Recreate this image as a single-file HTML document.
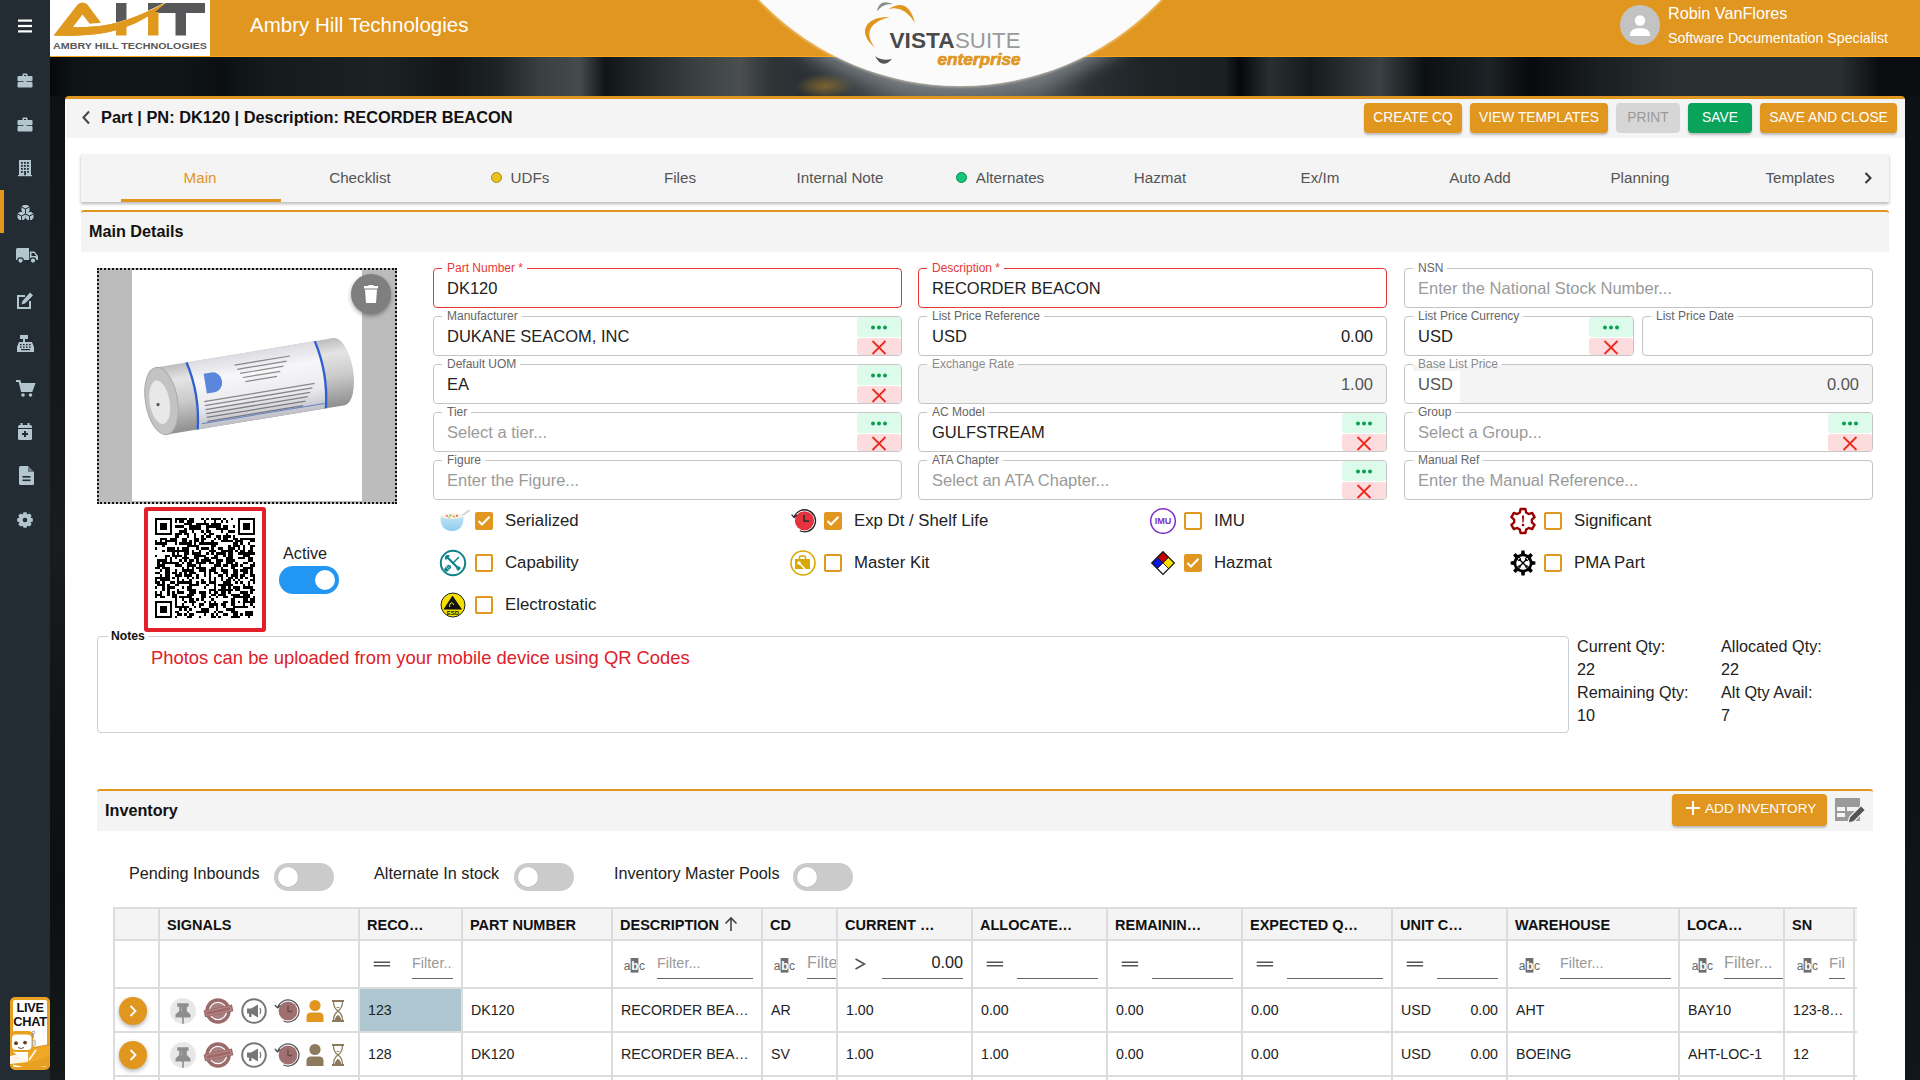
<!DOCTYPE html>
<html><head><meta charset="utf-8"><style>
*{box-sizing:border-box;margin:0;padding:0}
html,body{width:1920px;height:1080px;overflow:hidden}
body{position:relative;background:#0c1216;font-family:"Liberation Sans",sans-serif;color:#222}
.a{position:absolute;overflow:visible}
.t{position:absolute;white-space:nowrap}
.btn{position:absolute;top:103px;height:30px;border-radius:4px;color:#fff;font-size:13.8px;text-align:center;line-height:30px;box-shadow:0 2px 2px rgba(0,0,0,.22)}
.tab{position:absolute;top:154px;width:160px;height:48px;text-align:center;line-height:48px;font-size:15.2px;color:#555}
.fld{position:absolute;height:40px;border:1px solid #c4c4c4;border-radius:4px;background:#fff}
.fld .lb{position:absolute;left:8px;top:-8px;font-size:12px;color:#666;background:#fff;padding:0 4px 0 5px;line-height:14px;white-space:nowrap}
.fld .v{position:absolute;left:13px;top:9.5px;font-size:16.5px;color:#222;line-height:18px;white-space:nowrap}
.fld .ph{color:#9a9a9a}
.fld.req{border-color:#e53a35}
.fld.req .lb{color:#e53a35}
.acts{position:absolute;right:0;top:0;width:44px;height:38px}
.acts .g{position:absolute;left:0;top:0;width:44px;height:20px;background:#dcfbea;border-radius:3px}
.acts .r{position:absolute;left:0;top:21px;width:44px;height:17px;background:#fcdcdc;border-radius:3px}
.cb{position:absolute;width:18px;height:18px;border:2px solid #e0961f;border-radius:2px;background:#fff}
.cb.on{background:#e0961f}
.cbl{position:absolute;font-size:16.8px;color:#222;line-height:18px;white-space:nowrap}
.tg{position:absolute;width:60px;height:28px;border-radius:14px;background:#cbcbcb}
.tg i{position:absolute;left:4px;top:4px;width:20px;height:20px;border-radius:50%;background:#fff;box-shadow:0 0 0 0.5px #bbb}
.th{position:absolute;top:910px;height:30px;font-weight:bold;font-size:14.5px;line-height:30px;padding-left:6px;color:#111;white-space:nowrap;overflow:hidden}
.td{position:absolute;height:44px;font-size:14.2px;line-height:42px;padding-left:7px;color:#222;white-space:nowrap;overflow:hidden}
.fl{position:absolute;top:954px;height:25px;border-bottom:1.3px solid #666;font-size:14.5px;color:#9a9a9a;line-height:18px;white-space:nowrap;overflow:hidden}
</style></head><body>
<div class="a" style="left:0;top:0;width:50px;height:1080px;background:#222c32"></div>
<div class="a" style="left:50px;top:56px;width:1870px;height:40px;background:linear-gradient(90deg,#060809 0px,#0f1416 25px,#101517 130px,#0b0f11 170px,#151b1d 220px,#1c2224 330px,#121618 400px,#1e2527 450px,#3a4042 490px,#454b4d 530px,#101416 555px,#262c2e 600px,#3c4242 650px,#4a4e4e 690px,#303538 720px,#2a3034 750px,#3a4044 810px,#50565a 850px,#50565a 990px,#2a3034 1040px,#1e2326 1100px,#1a1f22 1175px,#05080a 1190px,#2a3032 1220px,#151a1c 1260px,#3a4043 1330px,#0c1012 1375px,#1c2225 1440px,#08090b 1480px,#1a1f22 1550px,#2a2f32 1630px,#2a2f32 1790px,#0a0d10 1830px,#0a0d10 1870px)"></div>
<div class="a" style="left:795px;top:74px;width:60px;height:24px;border-radius:50%;background:radial-gradient(closest-side,rgba(150,115,45,.75),rgba(150,115,45,0))"></div>
<div class="a" style="left:50px;top:96px;width:1870px;height:984px;background:linear-gradient(180deg,#0e1113 0px,#121616 200px,#181c1c 450px,#101314 650px,#0c0f10 800px,#161a1b 1000px)"></div>
<div class="a" style="left:1890px;top:96px;width:30px;height:984px;background:linear-gradient(180deg,#0c1116 0px,#0b1016 500px,#10161b 1000px)"></div>
<div class="a" style="left:683px;top:-468px;width:554px;height:554px;border-radius:50%;background:#8a9094;box-shadow:0 4px 18px 8px rgba(130,136,140,.8)"></div>
<div class="a" style="left:50px;top:0;width:1870px;height:57px;background:#e0961f;border-bottom:1px solid #f5a623"></div>
<svg class="a" style="left:18px;top:19px;" width="14" height="14" viewBox="0 0 14 14"><rect x="0" y="0.5" width="14" height="2.2" fill="#fff"/><rect x="0" y="5.9" width="14" height="2.2" fill="#fff"/><rect x="0" y="11.3" width="14" height="2.2" fill="#fff"/></svg>
<svg class="a" style="left:17px;top:73px;" width="16" height="15" viewBox="0 0 16 15"><path d="M5.5 3 V1.5 Q5.5 0.5 6.5 0.5 H9.5 Q10.5 0.5 10.5 1.5 V3 H9 V2 H7 V3 Z" fill="#b3c6ce"/><rect x="0.5" y="3" width="15" height="5.2" rx="1" fill="#b3c6ce"/><rect x="0.5" y="9" width="15" height="5.5" rx="1" fill="#b3c6ce"/><rect x="6.5" y="7" width="3" height="3" fill="#b3c6ce"/></svg>
<svg class="a" style="left:17px;top:117px;" width="16" height="15" viewBox="0 0 16 15"><path d="M5.5 3 V1.5 Q5.5 0.5 6.5 0.5 H9.5 Q10.5 0.5 10.5 1.5 V3 H9 V2 H7 V3 Z" fill="#b3c6ce"/><rect x="0.5" y="3" width="15" height="5.2" rx="1" fill="#b3c6ce"/><rect x="0.5" y="9" width="15" height="5.5" rx="1" fill="#b3c6ce"/><rect x="6.5" y="7" width="3" height="3" fill="#b3c6ce"/></svg>
<svg class="a" style="left:18px;top:160px;" width="14" height="16" viewBox="0 0 14 16"><rect x="1" y="0" width="12" height="15.5" fill="#b3c6ce"/><rect x="0" y="15" width="14" height="1.2" fill="#b3c6ce"/><rect x="3" y="2" width="1.8" height="1.8" fill="#222c32"/><rect x="3" y="5" width="1.8" height="1.8" fill="#222c32"/><rect x="3" y="8" width="1.8" height="1.8" fill="#222c32"/><rect x="3" y="11" width="1.8" height="1.8" fill="#222c32"/><rect x="6" y="2" width="1.8" height="1.8" fill="#222c32"/><rect x="6" y="5" width="1.8" height="1.8" fill="#222c32"/><rect x="6" y="8" width="1.8" height="1.8" fill="#222c32"/><rect x="9" y="2" width="1.8" height="1.8" fill="#222c32"/><rect x="9" y="5" width="1.8" height="1.8" fill="#222c32"/><rect x="9" y="8" width="1.8" height="1.8" fill="#222c32"/><rect x="9" y="11" width="1.8" height="1.8" fill="#222c32"/><rect x="6.1" y="11" width="1.8" height="4.2" fill="#222c32"/></svg>
<div class="a" style="left:0;top:190px;width:4px;height:43px;background:#e0961f"></div>
<svg class="a" style="left:17px;top:204px;" width="17" height="17" viewBox="-1 0 16 17"><g fill="#b3c6ce"><path d="M5 1 L9 1 L11 3 L11 7 L9 9 L5 9 L3 7 L3 3Z"/><path d="M1 8 L5 8 L7 10 L7 14 L5 16 L1 16 L-1 14 L-1 10Z"/><path d="M9 8 L13 8 L15 10 L15 14 L13 16 L9 16 L7 14 L7 10Z"/></g><g stroke="#222c32" stroke-width="1" fill="none"><path d="M3 3 L7 5 L11 3 M7 5 V9"/><path d="M-1 10 L3 12 L7 10 M3 12 V16"/><path d="M7 10 L11 12 L15 10 M11 12 V16"/></g></svg>
<svg class="a" style="left:16px;top:248px;" width="22" height="16" viewBox="0 0 22 16"><path d="M0 1.5 Q0 0 1.5 0 H13 V12 H0Z" fill="#b3c6ce"/><path d="M13.8 3.5 H18.5 L22 8 V12 H13.8Z" fill="#b3c6ce"/><path d="M15.5 5 H18 L20.2 8 H15.5Z" fill="#222c32"/><circle cx="4.5" cy="12.6" r="2.8" fill="#b3c6ce" stroke="#222c32" stroke-width="1.3"/><circle cx="17" cy="12.6" r="2.8" fill="#b3c6ce" stroke="#222c32" stroke-width="1.3"/></svg>
<svg class="a" style="left:16px;top:292px;" width="18" height="18" viewBox="0 0 18 18"><path d="M1 3 H9 V5 H3 V15 H13 V9 H15 V17 H1Z" fill="#b3c6ce"/><path d="M14 0.5 L17 3.5 L9 11.5 L5.5 12.5 L6.5 9Z" fill="#b3c6ce"/></svg>
<svg class="a" style="left:17px;top:335px;" width="17" height="17" viewBox="0 0 17 17"><rect x="3" y="0" width="8" height="4" fill="#b3c6ce"/><rect x="6" y="4" width="2" height="3" fill="#b3c6ce"/><path d="M2 7 H15 L17 12 V17 H0 V12Z" fill="#b3c6ce"/><rect x="3" y="9.0" width="1.6" height="1.3" fill="#222c32"/><rect x="3" y="11.5" width="1.6" height="1.3" fill="#222c32"/><rect x="6" y="9.0" width="1.6" height="1.3" fill="#222c32"/><rect x="6" y="11.5" width="1.6" height="1.3" fill="#222c32"/><rect x="9" y="9.0" width="1.6" height="1.3" fill="#222c32"/><rect x="9" y="11.5" width="1.6" height="1.3" fill="#222c32"/><rect x="12" y="9.0" width="1.6" height="1.3" fill="#222c32"/><rect x="12" y="11.5" width="1.6" height="1.3" fill="#222c32"/><rect x="4" y="14" width="9" height="1.2" fill="#222c32"/></svg>
<svg class="a" style="left:16px;top:380px;" width="19" height="17" viewBox="0 0 19 17"><path d="M0 1 H3.5 L6 11 H15.5 L18 4 H5" fill="none" stroke="#b3c6ce" stroke-width="2.2"/><path d="M5 4 H18 L15.5 11 H6Z" fill="#b3c6ce"/><circle cx="7" cy="15" r="1.8" fill="#b3c6ce"/><circle cx="14.5" cy="15" r="1.8" fill="#b3c6ce"/></svg>
<svg class="a" style="left:18px;top:423px;" width="14" height="17" viewBox="0 0 14 17"><rect x="0" y="2" width="14" height="15" rx="1.5" fill="#b3c6ce"/><rect x="2.5" y="0" width="2" height="4" fill="#b3c6ce"/><rect x="9.5" y="0" width="2" height="4" fill="#b3c6ce"/><rect x="0" y="5" width="14" height="1" fill="#222c32"/><path d="M6 8 H8 V10 H10 V12 H8 V14 H6 V12 H4 V10 H6Z" fill="#222c32"/></svg>
<svg class="a" style="left:19px;top:466px;" width="15" height="19" viewBox="0 0 15 19"><path d="M0 1.5 Q0 0 1.5 0 H9 L15 6 V17.5 Q15 19 13.5 19 H1.5 Q0 19 0 17.5Z" fill="#b3c6ce"/><path d="M9 0 V6 H15" fill="#222c32" opacity="0.5"/><rect x="3.5" y="10" width="8" height="1.6" fill="#222c32"/><rect x="3.5" y="13.5" width="8" height="1.6" fill="#222c32"/></svg>
<svg class="a" style="left:17px;top:512px;" width="16" height="16" viewBox="0 0 16 16"><g fill="#b3c6ce"><rect x="6.1" y="0.2" width="3.8" height="4" rx="0.8" transform="rotate(0 8 8)"/><rect x="6.1" y="0.2" width="3.8" height="4" rx="0.8" transform="rotate(45 8 8)"/><rect x="6.1" y="0.2" width="3.8" height="4" rx="0.8" transform="rotate(90 8 8)"/><rect x="6.1" y="0.2" width="3.8" height="4" rx="0.8" transform="rotate(135 8 8)"/><rect x="6.1" y="0.2" width="3.8" height="4" rx="0.8" transform="rotate(180 8 8)"/><rect x="6.1" y="0.2" width="3.8" height="4" rx="0.8" transform="rotate(225 8 8)"/><rect x="6.1" y="0.2" width="3.8" height="4" rx="0.8" transform="rotate(270 8 8)"/><rect x="6.1" y="0.2" width="3.8" height="4" rx="0.8" transform="rotate(315 8 8)"/><circle cx="8" cy="8" r="6.3"/></g><circle cx="8" cy="8" r="2.3" fill="#222c32"/></svg>
<div class="a" style="left:10px;top:997px;width:40px;height:73px;border:3px solid #e8a020;border-radius:5px;background:#fff"></div>
<div class="t" style="left:12px;top:1001px;width:36px;text-align:center;font-size:12.8px;font-weight:bold;line-height:14px;color:#111;letter-spacing:-0.3px">LIVE<br>CHAT</div>
<svg class="a" style="left:10px;top:1030px" width="40" height="40" viewBox="10 1030 40 40"><path d="M10 1050 L28 1062 L50 1054 L50 1066 L28 1068 L10 1064Z" fill="#e8a020"/><path d="M28 1048.5 L50 1044.5 L50 1056 L28 1063.5Z" fill="#f0a828"/><path d="M28 1048.5 L50 1044.5" stroke="#c88010" stroke-width="0.8"/><path d="M10 1056 L18 1054 L28 1062 L10 1064Z" fill="#fff" opacity="0.9"/><rect x="10.3" y="1031" width="23" height="21" rx="5" fill="#e8a020"/><rect x="12" y="1034.5" width="19.5" height="15.5" rx="4" fill="#fff"/><circle cx="16" cy="1043.2" r="1.9" fill="#6a3a10"/><circle cx="25" cy="1042.6" r="1.9" fill="#6a3a10"/><path d="M18 1047.5 Q21 1049.5 24 1047.5" stroke="#444" stroke-width="0.9" fill="none"/><path d="M33 1038 V1033" stroke="#777" stroke-width="0.8"/><circle cx="33.5" cy="1032.5" r="1.4" fill="#fff" stroke="#777" stroke-width="0.7"/><rect x="32.5" y="1040" width="3" height="6" rx="1.5" fill="#ddd" stroke="#888" stroke-width="0.5"/><path d="M29 1060 L36 1050" stroke="#fff" stroke-width="1.6"/></svg>
<div class="a" style="left:50px;top:0;width:160px;height:56px;background:#fff"></div>
<svg class="a" style="left:50px;top:0px;" width="160" height="56" viewBox="0 0 160 56"><path d="M66 3 H76.5 V24 H66Z" fill="#58585a"/><path d="M66 24 H76.5 V35.5 H66Z" fill="#e0991f"/><path d="M98 3 H155 V13 H136 V35.5 H125.5 V13 H98Z" fill="#58585a"/><path d="M98 12 H108.5 V35.5 H98Z" fill="#e0991f"/><path d="M3.5 35.5 C22 36.2 44 35.5 62 31.2 C84 26 103 15 116 2.5 C99 11 80 20 60 24.2 C45 27 32 27.5 23 27 L32.5 14.6 L39.6 23.7 L51 22.8 L37 4 Q32.5 0.8 28 4Z" fill="#e0991f"/><path d="M64 23.6 C80 20 99 11 116 2.5" stroke="#fff" stroke-width="1" fill="none"/><path d="M23 27 C32 27.5 45 27 60 24.2 C80 20 99 11 116 2.5 C103 15 84 26 62 31.2 C44 35.5 22 36.2 3.5 35.5Z" fill="#e0991f"/><text x="3" y="48.5" font-family="Liberation Sans" font-weight="bold" font-size="8.8" fill="#58585a" textLength="154" lengthAdjust="spacingAndGlyphs">AMBRY HILL TECHNOLOGIES</text></svg>
<div class="t" style="left:250px;top:13px;font-size:20.5px;color:#fff;line-height:24px">Ambry Hill Technologies</div>
<div class="a" style="left:683px;top:-468px;width:554px;height:554px;border-radius:50%;background:#fbfbfb;box-shadow:0 0 3px 1px rgba(255,240,210,.6)"></div>
<svg class="a" style="left:855px;top:0" width="180" height="75" viewBox="855 0 180 75"><path d="M877 11.5 Q879 -2 893 4 Q882 3.5 877 11.5Z" fill="#8c8c8c"/><path d="M888 9.5 Q908 -4 915 23 Q903 4 888 9.5Z" fill="#e0961f"/><path d="M890 17 C866 16 856 32 875 47.5 C864 34 869 22 890 17Z" fill="#e0961f"/><path d="M875 56 Q882 70 892 59 Q882 61.5 875 56Z" fill="#555"/><text x="889.5" y="47.8" font-family="Liberation Sans" font-weight="bold" font-size="22" fill="#4a4a4a" textLength="65" lengthAdjust="spacingAndGlyphs">VISTA</text><text x="955" y="47.8" font-family="Liberation Sans" font-size="22" fill="#9a9a9a" textLength="65.5" lengthAdjust="spacingAndGlyphs">SUITE</text><text x="937.5" y="64.5" font-family="Liberation Sans" font-weight="bold" font-style="italic" font-size="17" fill="#e0961f" stroke="#e0961f" stroke-width="0.7" textLength="83" lengthAdjust="spacingAndGlyphs">enterprise</text></svg>
<svg class="a" style="left:1620px;top:5px;" width="40" height="40" viewBox="0 0 40 40"><circle cx="20" cy="20" r="20" fill="#c3c3c3"/><circle cx="20" cy="15.5" r="5.2" fill="#fff"/><path d="M10 30 Q10 23 20 23 Q30 23 30 30 V31 H10Z" fill="#fff"/></svg>
<div class="t" style="left:1668px;top:4px;font-size:16.2px;color:#fff;line-height:19px">Robin VanFlores</div>
<div class="t" style="left:1668px;top:30px;font-size:14.2px;color:#fff;line-height:17px">Software Documentation Specialist</div>
<div class="a" style="left:65px;top:96px;width:1840px;height:1000px;background:#fff;border-top:3px solid #e0961f;border-radius:4px 4px 0 0"></div>
<div class="a" style="left:66px;top:99px;width:1839px;height:39px;background:#f4f4f4"></div>
<svg class="a" style="left:81px;top:110px;" width="10" height="15" viewBox="0 0 10 15"><path d="M8 1.5 L2.5 7.5 L8 13.5" stroke="#444" stroke-width="2" fill="none"/></svg>
<div class="t" style="left:101px;top:108px;font-size:16.35px;font-weight:bold;color:#111;line-height:19px">Part | PN: DK120 | Description: RECORDER BEACON</div>
<div class="btn" style="left:1364px;width:98px;background:#e0961f;color:#fff;">CREATE CQ</div>
<div class="btn" style="left:1470px;width:138px;background:#e0961f;color:#fff;">VIEW TEMPLATES</div>
<div class="btn" style="left:1616px;width:64px;background:#d6d6d6;color:#9a9a9a;box-shadow:none;">PRINT</div>
<div class="btn" style="left:1688px;width:64px;background:#0aa35a;color:#fff;">SAVE</div>
<div class="btn" style="left:1760px;width:137px;background:#e0961f;color:#fff;">SAVE AND CLOSE</div>
<div class="a" style="left:81px;top:154px;width:1808px;height:48px;background:#f4f4f4;box-shadow:0 2px 3px rgba(0,0,0,.28)"></div>
<div class="tab" style="left:120px;color:#e0961f">Main</div>
<div class="tab" style="left:280px;color:#555">Checklist</div>
<div class="tab" style="left:440px;color:#555"><span style="display:inline-block;width:11px;height:11px;border-radius:50%;background:#e8c41c;border:1px solid #a88a08;margin-right:9px;vertical-align:0px"></span>UDFs</div>
<div class="tab" style="left:600px;color:#555">Files</div>
<div class="tab" style="left:760px;color:#555">Internal Note</div>
<div class="tab" style="left:920px;color:#555"><span style="display:inline-block;width:11px;height:11px;border-radius:50%;background:#16c47a;border:1px solid #0a8a50;margin-right:9px;vertical-align:0px"></span>Alternates</div>
<div class="tab" style="left:1080px;color:#555">Hazmat</div>
<div class="tab" style="left:1240px;color:#555">Ex/Im</div>
<div class="tab" style="left:1400px;color:#555">Auto Add</div>
<div class="tab" style="left:1560px;color:#555">Planning</div>
<div class="tab" style="left:1720px;color:#555">Templates</div>
<div class="a" style="left:121px;top:199px;width:160px;height:3px;background:#e0961f"></div>
<svg class="a" style="left:1863px;top:171px;" width="10" height="14" viewBox="0 0 10 14"><path d="M2.5 2 L7.5 7 L2.5 12" stroke="#333" stroke-width="2" fill="none"/></svg>
<div class="a" style="left:81px;top:210px;width:1808px;height:42px;background:#f4f4f4;border-top:2px solid #e0961f;border-radius:3px 3px 0 0"></div>
<div class="t" style="left:89px;top:222px;font-size:16.2px;font-weight:bold;color:#111;line-height:19px">Main Details</div>
<div class="a" style="left:97px;top:268px;width:300px;height:236px;border:2px dotted #111;background:#bcbcbc"></div>
<div class="a" style="left:132px;top:270px;width:230px;height:231px;background:#fff"></div>
<svg class="a" style="left:132px;top:270px" width="230" height="231" viewBox="132 270 230 231"><defs><linearGradient id="cyl" x1="0" y1="0" x2="0" y2="1"><stop offset="0" stop-color="#bdbdbd"/><stop offset="0.22" stop-color="#e4e4e4"/><stop offset="0.55" stop-color="#cbcbcb"/><stop offset="1" stop-color="#8f8f8f"/></linearGradient><linearGradient id="lab" x1="0" y1="0" x2="0" y2="1"><stop offset="0" stop-color="#dcdce2"/><stop offset="0.3" stop-color="#f7f7f9"/><stop offset="0.7" stop-color="#eaeaee"/><stop offset="1" stop-color="#bfc0c6"/></linearGradient></defs><g transform="translate(161.5 401) rotate(-9.4)"><rect x="0" y="-34" width="180" height="68" fill="url(#cyl)"/><ellipse cx="180" cy="0" rx="14" ry="34" fill="url(#cyl)"/><path d="M30 -34 H162 Q170 0 162 34 H30 Q38 0 30 -34Z" fill="url(#lab)"/><path d="M31 -34 Q39 0 31 34" stroke="#2f5fd0" stroke-width="2.4" fill="none"/><path d="M161 -34 Q169 0 161 34" stroke="#2f5fd0" stroke-width="2.4" fill="none"/><path d="M46 -20 h8 a9 10 0 0 1 0 20 h-8z" fill="#5a86dc"/><rect x="78" y="-24.0" width="56" height="1.2" fill="#333" opacity="0.55"/><rect x="80" y="-19.5" width="50" height="1.2" fill="#333" opacity="0.55"/><rect x="82" y="-15.0" width="44" height="1.2" fill="#333" opacity="0.55"/><rect x="84" y="-10.5" width="38" height="1.2" fill="#333" opacity="0.55"/><rect x="86" y="-6.0" width="32" height="1.2" fill="#333" opacity="0.55"/><rect x="42" y="7" width="112" height="1.3" fill="#333" opacity="0.55"/><rect x="42" y="11" width="109" height="1.3" fill="#333" opacity="0.55"/><rect x="42" y="15" width="106" height="1.3" fill="#333" opacity="0.55"/><rect x="42" y="19" width="103" height="1.3" fill="#333" opacity="0.55"/><rect x="42" y="23" width="100" height="1.3" fill="#333" opacity="0.55"/><rect x="42" y="27" width="97" height="1.3" fill="#333" opacity="0.55"/><path d="M36 29 H160" stroke="#3a64c8" stroke-width="1" opacity="0.7"/><ellipse cx="0" cy="0" rx="16" ry="34" fill="#c3c3c3" stroke="#a9a9a9" stroke-width="1"/><ellipse cx="-2" cy="1" rx="10" ry="22" fill="#e8e8e8"/><circle cx="-4" cy="3" r="1.6" fill="#555"/></g></svg>
<div class="a" style="left:351px;top:274px;width:40px;height:40px;border-radius:50%;background:#7f7f7f;box-shadow:0 2px 4px rgba(0,0,0,.35)"></div>
<svg class="a" style="left:362px;top:285px;" width="18" height="19" viewBox="0 0 18 19"><rect x="2" y="1" width="14" height="2.5" fill="#fff"/><rect x="6.5" y="0" width="5" height="2" fill="#fff"/><path d="M3 4.5 H15 L14 18 H4Z" fill="#fff"/></svg>
<div class="a" style="left:144px;top:507px;width:122px;height:125px;border:4px solid #e3202a;border-radius:3px;background:#fff;z-index:1"></div>
<svg class="a" style="left:155px;top:518px;shape-rendering:crispEdges;z-index:2" width="100" height="100" viewBox="0 0 41 41"><path d="M0 0h7v1h-7zM8 0h5v1h-5zM14 0h2v1h-2zM19 0h1v1h-1zM21 0h1v1h-1zM23 0h4v1h-4zM28 0h1v1h-1zM31 0h1v1h-1zM34 0h7v1h-7zM0 1h1v1h-1zM6 1h1v1h-1zM8 1h1v1h-1zM10 1h2v1h-2zM13 1h3v1h-3zM20 1h1v1h-1zM24 1h1v1h-1zM27 1h1v1h-1zM29 1h1v1h-1zM34 1h1v1h-1zM40 1h1v1h-1zM0 2h1v1h-1zM2 2h3v1h-3zM6 2h1v1h-1zM12 2h3v1h-3zM17 2h5v1h-5zM23 2h4v1h-4zM34 2h1v1h-1zM36 2h3v1h-3zM40 2h1v1h-1zM0 3h1v1h-1zM2 3h3v1h-3zM6 3h1v1h-1zM8 3h4v1h-4zM14 3h5v1h-5zM21 3h6v1h-6zM28 3h2v1h-2zM32 3h1v1h-1zM34 3h1v1h-1zM36 3h3v1h-3zM40 3h1v1h-1zM0 4h1v1h-1zM2 4h3v1h-3zM6 4h1v1h-1zM12 4h1v1h-1zM14 4h5v1h-5zM21 4h1v1h-1zM25 4h5v1h-5zM34 4h1v1h-1zM36 4h3v1h-3zM40 4h1v1h-1zM0 5h1v1h-1zM6 5h1v1h-1zM10 5h3v1h-3zM15 5h1v1h-1zM19 5h1v1h-1zM21 5h2v1h-2zM27 5h1v1h-1zM30 5h3v1h-3zM34 5h1v1h-1zM40 5h1v1h-1zM0 6h7v1h-7zM8 6h3v1h-3zM12 6h2v1h-2zM16 6h1v1h-1zM20 6h1v1h-1zM22 6h2v1h-2zM29 6h1v1h-1zM34 6h7v1h-7zM8 7h2v1h-2zM13 7h1v1h-1zM16 7h1v1h-1zM19 7h1v1h-1zM21 7h2v1h-2zM25 7h2v1h-2zM28 7h3v1h-3zM32 7h1v1h-1zM2 8h3v1h-3zM6 8h3v1h-3zM11 8h2v1h-2zM16 8h2v1h-2zM19 8h2v1h-2zM24 8h1v1h-1zM26 8h1v1h-1zM28 8h2v1h-2zM32 8h2v1h-2zM35 8h6v1h-6zM0 9h1v1h-1zM2 9h1v1h-1zM4 9h5v1h-5zM11 9h2v1h-2zM14 9h1v1h-1zM16 9h2v1h-2zM19 9h1v1h-1zM23 9h1v1h-1zM27 9h5v1h-5zM33 9h3v1h-3zM39 9h2v1h-2zM0 10h5v1h-5zM8 10h1v1h-1zM10 10h5v1h-5zM16 10h1v1h-1zM18 10h8v1h-8zM32 10h2v1h-2zM35 10h1v1h-1zM38 10h1v1h-1zM3 11h1v1h-1zM13 11h5v1h-5zM23 11h2v1h-2zM30 11h1v1h-1zM32 11h3v1h-3zM36 11h1v1h-1zM39 11h2v1h-2zM0 12h1v1h-1zM5 12h3v1h-3zM9 12h1v1h-1zM11 12h3v1h-3zM17 12h1v1h-1zM19 12h3v1h-3zM23 12h1v1h-1zM26 12h2v1h-2zM30 12h3v1h-3zM34 12h1v1h-1zM36 12h1v1h-1zM39 12h1v1h-1zM3 13h1v1h-1zM5 13h9v1h-9zM15 13h1v1h-1zM18 13h1v1h-1zM22 13h3v1h-3zM27 13h5v1h-5zM33 13h1v1h-1zM35 13h2v1h-2zM38 13h2v1h-2zM7 14h1v1h-1zM9 14h1v1h-1zM12 14h2v1h-2zM15 14h4v1h-4zM21 14h1v1h-1zM23 14h1v1h-1zM25 14h4v1h-4zM30 14h2v1h-2zM34 14h7v1h-7zM0 15h1v1h-1zM4 15h2v1h-2zM7 15h4v1h-4zM12 15h1v1h-1zM16 15h5v1h-5zM24 15h2v1h-2zM28 15h1v1h-1zM30 15h2v1h-2zM36 15h3v1h-3zM4 16h1v1h-1zM6 16h1v1h-1zM8 16h1v1h-1zM11 16h3v1h-3zM16 16h2v1h-2zM20 16h2v1h-2zM23 16h3v1h-3zM29 16h3v1h-3zM34 16h3v1h-3zM38 16h2v1h-2zM1 17h4v1h-4zM6 17h1v1h-1zM10 17h1v1h-1zM12 17h1v1h-1zM14 17h2v1h-2zM17 17h1v1h-1zM19 17h4v1h-4zM25 17h3v1h-3zM29 17h4v1h-4zM38 17h2v1h-2zM1 18h1v1h-1zM3 18h7v1h-7zM11 18h1v1h-1zM13 18h2v1h-2zM17 18h4v1h-4zM22 18h2v1h-2zM25 18h2v1h-2zM29 18h3v1h-3zM33 18h1v1h-1zM36 18h2v1h-2zM40 18h1v1h-1zM1 19h3v1h-3zM8 19h3v1h-3zM13 19h4v1h-4zM18 19h1v1h-1zM24 19h3v1h-3zM28 19h2v1h-2zM31 19h3v1h-3zM35 19h1v1h-1zM39 19h2v1h-2zM0 20h2v1h-2zM3 20h3v1h-3zM11 20h1v1h-1zM13 20h1v1h-1zM15 20h1v1h-1zM17 20h4v1h-4zM23 20h2v1h-2zM27 20h1v1h-1zM31 20h2v1h-2zM36 20h4v1h-4zM2 21h1v1h-1zM4 21h2v1h-2zM8 21h1v1h-1zM11 21h5v1h-5zM18 21h3v1h-3zM22 21h3v1h-3zM27 21h3v1h-3zM32 21h2v1h-2zM35 21h3v1h-3zM39 21h1v1h-1zM0 22h2v1h-2zM4 22h2v1h-2zM7 22h2v1h-2zM10 22h1v1h-1zM12 22h1v1h-1zM14 22h3v1h-3zM20 22h1v1h-1zM22 22h1v1h-1zM24 22h2v1h-2zM28 22h2v1h-2zM32 22h2v1h-2zM36 22h2v1h-2zM39 22h1v1h-1zM2 23h1v1h-1zM4 23h2v1h-2zM8 23h3v1h-3zM12 23h3v1h-3zM17 23h1v1h-1zM20 23h1v1h-1zM22 23h1v1h-1zM26 23h2v1h-2zM29 23h1v1h-1zM31 23h3v1h-3zM35 23h2v1h-2zM39 23h2v1h-2zM0 24h6v1h-6zM7 24h1v1h-1zM9 24h1v1h-1zM13 24h1v1h-1zM15 24h1v1h-1zM17 24h1v1h-1zM22 24h1v1h-1zM24 24h1v1h-1zM27 24h1v1h-1zM30 24h2v1h-2zM33 24h1v1h-1zM35 24h1v1h-1zM37 24h1v1h-1zM40 24h1v1h-1zM0 25h1v1h-1zM2 25h4v1h-4zM9 25h1v1h-1zM11 25h1v1h-1zM14 25h1v1h-1zM19 25h1v1h-1zM22 25h1v1h-1zM24 25h1v1h-1zM27 25h1v1h-1zM29 25h2v1h-2zM32 25h1v1h-1zM34 25h1v1h-1zM39 25h2v1h-2zM0 26h2v1h-2zM3 26h1v1h-1zM6 26h2v1h-2zM9 26h6v1h-6zM17 26h1v1h-1zM19 26h2v1h-2zM22 26h3v1h-3zM28 26h3v1h-3zM33 26h1v1h-1zM35 26h1v1h-1zM38 26h1v1h-1zM40 26h1v1h-1zM1 27h3v1h-3zM5 27h1v1h-1zM8 27h2v1h-2zM14 27h4v1h-4zM21 27h1v1h-1zM24 27h1v1h-1zM26 27h6v1h-6zM36 27h1v1h-1zM38 27h1v1h-1zM0 28h1v1h-1zM3 28h1v1h-1zM5 28h3v1h-3zM11 28h1v1h-1zM13 28h2v1h-2zM20 28h1v1h-1zM24 28h1v1h-1zM27 28h2v1h-2zM30 28h1v1h-1zM32 28h3v1h-3zM36 28h4v1h-4zM3 29h1v1h-1zM5 29h1v1h-1zM9 29h1v1h-1zM13 29h4v1h-4zM22 29h3v1h-3zM26 29h6v1h-6zM33 29h2v1h-2zM39 29h2v1h-2zM0 30h1v1h-1zM2 30h1v1h-1zM5 30h1v1h-1zM7 30h1v1h-1zM9 30h3v1h-3zM14 30h3v1h-3zM18 30h3v1h-3zM22 30h1v1h-1zM24 30h2v1h-2zM27 30h2v1h-2zM30 30h1v1h-1zM35 30h3v1h-3zM39 30h1v1h-1zM0 31h3v1h-3zM5 31h1v1h-1zM7 31h2v1h-2zM13 31h3v1h-3zM19 31h2v1h-2zM23 31h2v1h-2zM26 31h3v1h-3zM31 31h4v1h-4zM36 31h3v1h-3zM0 32h1v1h-1zM2 32h2v1h-2zM7 32h2v1h-2zM10 32h5v1h-5zM19 32h2v1h-2zM22 32h1v1h-1zM25 32h1v1h-1zM28 32h2v1h-2zM32 32h7v1h-7zM40 32h1v1h-1zM8 33h1v1h-1zM11 33h1v1h-1zM14 33h2v1h-2zM17 33h1v1h-1zM19 33h1v1h-1zM23 33h1v1h-1zM31 33h2v1h-2zM36 33h2v1h-2zM39 33h2v1h-2zM0 34h7v1h-7zM8 34h1v1h-1zM12 34h1v1h-1zM14 34h3v1h-3zM20 34h1v1h-1zM22 34h1v1h-1zM24 34h1v1h-1zM28 34h2v1h-2zM31 34h2v1h-2zM34 34h1v1h-1zM36 34h5v1h-5zM0 35h1v1h-1zM6 35h1v1h-1zM8 35h1v1h-1zM11 35h1v1h-1zM15 35h1v1h-1zM18 35h2v1h-2zM22 35h4v1h-4zM27 35h2v1h-2zM31 35h2v1h-2zM36 35h1v1h-1zM39 35h1v1h-1zM0 36h1v1h-1zM2 36h3v1h-3zM6 36h1v1h-1zM8 36h6v1h-6zM16 36h1v1h-1zM18 36h1v1h-1zM22 36h2v1h-2zM25 36h1v1h-1zM28 36h1v1h-1zM32 36h6v1h-6zM40 36h1v1h-1zM0 37h1v1h-1zM2 37h3v1h-3zM6 37h1v1h-1zM10 37h1v1h-1zM12 37h1v1h-1zM14 37h1v1h-1zM19 37h3v1h-3zM25 37h1v1h-1zM29 37h4v1h-4zM0 38h1v1h-1zM2 38h3v1h-3zM6 38h1v1h-1zM8 38h2v1h-2zM13 38h1v1h-1zM17 38h5v1h-5zM24 38h1v1h-1zM26 38h2v1h-2zM31 38h3v1h-3zM37 38h3v1h-3zM0 39h1v1h-1zM6 39h1v1h-1zM9 39h2v1h-2zM12 39h1v1h-1zM14 39h2v1h-2zM20 39h1v1h-1zM23 39h1v1h-1zM25 39h1v1h-1zM28 39h2v1h-2zM32 39h2v1h-2zM35 39h1v1h-1zM37 39h3v1h-3zM0 40h7v1h-7zM8 40h1v1h-1zM13 40h2v1h-2zM18 40h1v1h-1zM23 40h2v1h-2zM26 40h1v1h-1zM31 40h4v1h-4zM38 40h1v1h-1z" fill="#000"/></svg>
<div class="t" style="left:283px;top:544px;font-size:16.2px;color:#222;line-height:18px">Active</div>
<div class="a" style="left:279px;top:566px;width:60px;height:28px;border-radius:14px;background:#2196f3"></div>
<div class="a" style="left:315px;top:570px;width:20px;height:20px;border-radius:50%;background:#fff"></div>
<div class="fld req" style="left:433px;top:268px;width:469px;"><div class="lb" style="">Part Number *</div><div class="v" style="">DK120</div></div>
<div class="fld req" style="left:918px;top:268px;width:469px;"><div class="lb" style="">Description *</div><div class="v" style="">RECORDER BEACON</div></div>
<div class="fld" style="left:1404px;top:268px;width:469px;"><div class="lb" style="">NSN</div><div class="v ph" style="">Enter the National Stock Number...</div></div>
<div class="fld" style="left:433px;top:316px;width:469px;"><div class="lb" style="">Manufacturer</div><div class="v" style="">DUKANE SEACOM, INC</div><div class="acts"><div class="g"></div><div class="r"></div></div></div>
<svg class="a" style="left:871px;top:324.5px;" width="16" height="5" viewBox="0 0 16 5"><circle cx="2" cy="2.5" r="2" fill="#08a050"/><circle cx="8" cy="2.5" r="2" fill="#08a050"/><circle cx="14" cy="2.5" r="2" fill="#08a050"/></svg><svg class="a" style="left:871px;top:339.5px;" width="16" height="15" viewBox="0 0 16 15"><path d="M1.5 1 L14.5 14 M14.5 1 L1.5 14" stroke="#ee2a20" stroke-width="1.8"/></svg>
<div class="fld" style="left:918px;top:316px;width:469px;"><div class="lb" style="">List Price Reference</div><div class="v" style="">USD</div><div class="v" style="left:auto;right:13px;">0.00</div></div>
<div class="fld" style="left:1404px;top:316px;width:230px;"><div class="lb" style="">List Price Currency</div><div class="v" style="">USD</div><div class="acts"><div class="g"></div><div class="r"></div></div></div>
<svg class="a" style="left:1603px;top:324.5px;" width="16" height="5" viewBox="0 0 16 5"><circle cx="2" cy="2.5" r="2" fill="#08a050"/><circle cx="8" cy="2.5" r="2" fill="#08a050"/><circle cx="14" cy="2.5" r="2" fill="#08a050"/></svg><svg class="a" style="left:1603px;top:339.5px;" width="16" height="15" viewBox="0 0 16 15"><path d="M1.5 1 L14.5 14 M14.5 1 L1.5 14" stroke="#ee2a20" stroke-width="1.8"/></svg>
<div class="fld" style="left:1642px;top:316px;width:231px;"><div class="lb" style="">List Price Date</div></div>
<div class="fld" style="left:433px;top:364px;width:469px;"><div class="lb" style="">Default UOM</div><div class="v" style="">EA</div><div class="acts"><div class="g"></div><div class="r"></div></div></div>
<svg class="a" style="left:871px;top:372.5px;" width="16" height="5" viewBox="0 0 16 5"><circle cx="2" cy="2.5" r="2" fill="#08a050"/><circle cx="8" cy="2.5" r="2" fill="#08a050"/><circle cx="14" cy="2.5" r="2" fill="#08a050"/></svg><svg class="a" style="left:871px;top:387.5px;" width="16" height="15" viewBox="0 0 16 15"><path d="M1.5 1 L14.5 14 M14.5 1 L1.5 14" stroke="#ee2a20" stroke-width="1.8"/></svg>
<div class="fld" style="left:918px;top:364px;width:469px;background:#f4f4f4;"><div class="lb" style="background:linear-gradient(#fff 8px,#f4f4f4 8px);color:#8a8a8a;">Exchange Rate</div><div class="v" style="left:auto;right:13px;color:#555;">1.00</div></div>
<div class="fld" style="left:1404px;top:364px;width:469px;background:#f4f4f4;"><div style="position:absolute;left:0;top:0;width:55px;height:38px;background:#fff;border-radius:4px 0 0 4px;z-index:0"></div><div class="lb" style="background:linear-gradient(#fff 8px,#f4f4f4 8px);color:#8a8a8a;">Base List Price</div><div class="v" style="color:#555;">USD</div><div class="v" style="left:auto;right:13px;color:#555;">0.00</div></div>
<div class="fld" style="left:433px;top:412px;width:469px;"><div class="lb" style="">Tier</div><div class="v ph" style="">Select a tier...</div><div class="acts"><div class="g"></div><div class="r"></div></div></div>
<svg class="a" style="left:871px;top:420.5px;" width="16" height="5" viewBox="0 0 16 5"><circle cx="2" cy="2.5" r="2" fill="#08a050"/><circle cx="8" cy="2.5" r="2" fill="#08a050"/><circle cx="14" cy="2.5" r="2" fill="#08a050"/></svg><svg class="a" style="left:871px;top:435.5px;" width="16" height="15" viewBox="0 0 16 15"><path d="M1.5 1 L14.5 14 M14.5 1 L1.5 14" stroke="#ee2a20" stroke-width="1.8"/></svg>
<div class="fld" style="left:918px;top:412px;width:469px;"><div class="lb" style="">AC Model</div><div class="v" style="">GULFSTREAM</div><div class="acts"><div class="g"></div><div class="r"></div></div></div>
<svg class="a" style="left:1356px;top:420.5px;" width="16" height="5" viewBox="0 0 16 5"><circle cx="2" cy="2.5" r="2" fill="#08a050"/><circle cx="8" cy="2.5" r="2" fill="#08a050"/><circle cx="14" cy="2.5" r="2" fill="#08a050"/></svg><svg class="a" style="left:1356px;top:435.5px;" width="16" height="15" viewBox="0 0 16 15"><path d="M1.5 1 L14.5 14 M14.5 1 L1.5 14" stroke="#ee2a20" stroke-width="1.8"/></svg>
<div class="fld" style="left:1404px;top:412px;width:469px;"><div class="lb" style="">Group</div><div class="v ph" style="">Select a Group...</div><div class="acts"><div class="g"></div><div class="r"></div></div></div>
<svg class="a" style="left:1842px;top:420.5px;" width="16" height="5" viewBox="0 0 16 5"><circle cx="2" cy="2.5" r="2" fill="#08a050"/><circle cx="8" cy="2.5" r="2" fill="#08a050"/><circle cx="14" cy="2.5" r="2" fill="#08a050"/></svg><svg class="a" style="left:1842px;top:435.5px;" width="16" height="15" viewBox="0 0 16 15"><path d="M1.5 1 L14.5 14 M14.5 1 L1.5 14" stroke="#ee2a20" stroke-width="1.8"/></svg>
<div class="fld" style="left:433px;top:460px;width:469px;"><div class="lb" style="">Figure</div><div class="v ph" style="">Enter the Figure...</div></div>
<div class="fld" style="left:918px;top:460px;width:469px;"><div class="lb" style="">ATA Chapter</div><div class="v ph" style="">Select an ATA Chapter...</div><div class="acts"><div class="g"></div><div class="r"></div></div></div>
<svg class="a" style="left:1356px;top:468.5px;" width="16" height="5" viewBox="0 0 16 5"><circle cx="2" cy="2.5" r="2" fill="#08a050"/><circle cx="8" cy="2.5" r="2" fill="#08a050"/><circle cx="14" cy="2.5" r="2" fill="#08a050"/></svg><svg class="a" style="left:1356px;top:483.5px;" width="16" height="15" viewBox="0 0 16 15"><path d="M1.5 1 L14.5 14 M14.5 1 L1.5 14" stroke="#ee2a20" stroke-width="1.8"/></svg>
<div class="fld" style="left:1404px;top:460px;width:469px;"><div class="lb" style="">Manual Ref</div><div class="v ph" style="">Enter the Manual Reference...</div></div>
<svg class="a" style="left:439px;top:509px;" width="31" height="24" viewBox="0 0 31 24"><defs><linearGradient id="bw" x1="0" y1="0" x2="0" y2="1"><stop offset="0" stop-color="#bfe4f6"/><stop offset="1" stop-color="#8ccbed"/></linearGradient></defs><path d="M22 7.5 L30 1.5" stroke="#d4d4d4" stroke-width="2" stroke-linecap="round"/><ellipse cx="13" cy="7.5" rx="11.5" ry="3.3" fill="#f6f1e4"/><circle cx="8" cy="7" r="1.1" fill="#f06a8a"/><circle cx="11.5" cy="6.5" r="1.1" fill="#6cc070"/><circle cx="15" cy="7.5" r="1.1" fill="#f0a040"/><circle cx="18" cy="6.8" r="1" fill="#e05050"/><circle cx="10" cy="8.5" r="1" fill="#f0c040"/><path d="M1.5 8 Q1 21.5 13 22 Q25 21.5 24.5 8 Q13 12 1.5 8Z" fill="url(#bw)"/></svg>
<svg class="a" style="left:439px;top:549px;" width="28" height="28" viewBox="0 0 28 28"><circle cx="14" cy="14" r="12.2" fill="none" stroke="#10828a" stroke-width="2"/><path d="M9 9 L19.5 19.5" stroke="#10828a" stroke-width="2.2"/><path d="M6.5 8.5 A3 3 0 0 1 8.5 6.5 M9.5 6 A3.2 3.2 0 0 1 6 9.5" stroke="#10828a" stroke-width="1.8" fill="none"/><path d="M7 7.5 A3.2 3.2 0 0 0 10.5 8.5 L9 10 A3.2 3.2 0 0 1 7 7.5Z" fill="#10828a"/><path d="M19 21.5 A3.2 3.2 0 0 1 21.5 19 M20.5 18 A3.2 3.2 0 0 0 18 20.5" stroke="#10828a" stroke-width="1.8" fill="none"/><path d="M20 8 L13.5 14.5" stroke="#10828a" stroke-width="1.4"/><rect x="6.5" y="15.5" width="4.6" height="7.5" rx="2" transform="rotate(45 8.8 19.2)" fill="#10828a"/><path d="M7 18 L10 21 M8.3 16.8 L11.3 19.8" stroke="#fff" stroke-width="0.6"/></svg>
<svg class="a" style="left:440px;top:592px;" width="26" height="26" viewBox="0 0 26 26"><circle cx="13" cy="13" r="12" fill="#f5df00" stroke="#222" stroke-width="1"/><path d="M12.5 3.5 L22 17.5 H3.5Z" fill="#111"/><path d="M9.5 15 Q9 11 12 10.5 L14 13" stroke="#f5df00" stroke-width="1" fill="none"/><text x="13" y="23.3" font-family="Liberation Sans" font-weight="bold" font-size="6" text-anchor="middle" fill="#111">ESD</text></svg>
<svg class="a" style="left:789px;top:506px;" width="28" height="28" viewBox="0 0 28 28"><circle cx="15.5" cy="14.8" r="9.6" fill="#e5323e"/><path d="M10.85 24.77 A11 11 0 1 0 5.16 11.04" stroke="#222" stroke-width="1.3" fill="none"/><path d="M2.6 8.6 L5.2 11.6 L8 8.8" stroke="#222" stroke-width="1.3" fill="none"/><path d="M15 9 V15.2 H20.2" stroke="#333" stroke-width="1.7" fill="none"/></svg>
<svg class="a" style="left:789px;top:549px;" width="28" height="28" viewBox="0 0 28 28"><circle cx="14" cy="14" r="12" fill="none" stroke="#d6a800" stroke-width="1.6"/><rect x="6" y="10" width="15" height="10" fill="#d6a800"/><path d="M10.5 10 V8 Q10.5 7 11.5 7 H15.5 Q16.5 7 16.5 8 V10" stroke="#d6a800" stroke-width="1.4" fill="none"/><path d="M10 14 L16 20" stroke="#fff" stroke-width="1.6"/><circle cx="10" cy="14" r="1.8" fill="#fff"/></svg>
<svg class="a" style="left:1149px;top:507px;" width="28" height="28" viewBox="0 0 28 28"><circle cx="14" cy="14" r="12.3" fill="none" stroke="#7b2ccc" stroke-width="1.5"/><text x="14" y="17" font-family="Liberation Sans" font-weight="bold" font-size="9" text-anchor="middle" fill="#7b2ccc">IMU</text></svg>
<svg class="a" style="left:1151px;top:551px;" width="24" height="24" viewBox="0 0 24 24"><g transform="rotate(45 12 12)"><rect x="4" y="4" width="8" height="8" fill="#c00000"/><rect x="12" y="4" width="8" height="8" fill="#f8e000"/><rect x="4" y="12" width="8" height="8" fill="#0a14e0"/><rect x="12" y="12" width="8" height="8" fill="#fff"/><rect x="4" y="4" width="16" height="16" fill="none" stroke="#111" stroke-width="1.2"/><path d="M12 4 V20 M4 12 H20" stroke="#111" stroke-width="0.8"/></g></svg>
<svg class="a" style="left:1509px;top:507px;" width="28" height="28" viewBox="0 0 28 28"><path d="M10.83 5.58 L11.58 2.04 L16.42 2.04 L17.17 5.58 L19.71 7.04 L23.14 5.92 L25.57 10.12 L22.88 12.53 L22.88 15.47 L25.57 17.88 L23.14 22.08 L19.71 20.96 L17.17 22.42 L16.42 25.96 L11.58 25.96 L10.83 22.42 L8.29 20.96 L4.86 22.08 L2.43 17.88 L5.12 15.47 L5.12 12.53 L2.43 10.12 L4.86 5.92 L8.29 7.04Z" fill="#fff" stroke="#9a0000" stroke-width="2.4" stroke-linejoin="round"/><path d="M13 8.5 H15 L14.6 15.5 H13.4Z" fill="#9a0000"/><circle cx="14" cy="18" r="1.3" fill="#9a0000"/></svg>
<svg class="a" style="left:1509px;top:549px;" width="28" height="28" viewBox="0 0 28 28"><path d="M12.11 4.69 L12.38 1.61 L15.62 1.61 L15.89 4.69 L19.25 6.08 L21.62 4.09 L23.91 6.38 L21.92 8.75 L23.31 12.11 L26.39 12.38 L26.39 15.62 L23.31 15.89 L21.92 19.25 L23.91 21.62 L21.62 23.91 L19.25 21.92 L15.89 23.31 L15.62 26.39 L12.38 26.39 L12.11 23.31 L8.75 21.92 L6.38 23.91 L4.09 21.62 L6.08 19.25 L4.69 15.89 L1.61 15.62 L1.61 12.38 L4.69 12.11 L6.08 8.75 L4.09 6.38 L6.38 4.09 L8.75 6.08Z" fill="#000"/><circle cx="14" cy="14" r="6.8" fill="#fff"/><path d="M10 10 L18 18 M18 10 L10 18" stroke="#000" stroke-width="1.4"/><circle cx="10" cy="10" r="1.6" fill="none" stroke="#000" stroke-width="1"/><circle cx="18" cy="10" r="1.6" fill="none" stroke="#000" stroke-width="1"/><circle cx="10" cy="18" r="1.2" fill="none" stroke="#000" stroke-width="1"/><circle cx="18" cy="18" r="1.2" fill="none" stroke="#000" stroke-width="1"/></svg>
<div class="cb on" style="left:475px;top:512px"></div>
<svg class="a" style="left:475px;top:512px" width="18" height="18" viewBox="0 0 18 18"><path d="M3.5 9 L7 12.5 L14.5 4.8" stroke="#fff" stroke-width="2" fill="none"/></svg>
<div class="cbl" style="left:505px;top:512px">Serialized</div>
<div class="cb on" style="left:824px;top:512px"></div>
<svg class="a" style="left:824px;top:512px" width="18" height="18" viewBox="0 0 18 18"><path d="M3.5 9 L7 12.5 L14.5 4.8" stroke="#fff" stroke-width="2" fill="none"/></svg>
<div class="cbl" style="left:854px;top:512px">Exp Dt / Shelf Life</div>
<div class="cb" style="left:1184px;top:512px"></div>
<div class="cbl" style="left:1214px;top:512px">IMU</div>
<div class="cb" style="left:1544px;top:512px"></div>
<div class="cbl" style="left:1574px;top:512px">Significant</div>
<div class="cb" style="left:475px;top:554px"></div>
<div class="cbl" style="left:505px;top:554px">Capability</div>
<div class="cb" style="left:824px;top:554px"></div>
<div class="cbl" style="left:854px;top:554px">Master Kit</div>
<div class="cb on" style="left:1184px;top:554px"></div>
<svg class="a" style="left:1184px;top:554px" width="18" height="18" viewBox="0 0 18 18"><path d="M3.5 9 L7 12.5 L14.5 4.8" stroke="#fff" stroke-width="2" fill="none"/></svg>
<div class="cbl" style="left:1214px;top:554px">Hazmat</div>
<div class="cb" style="left:1544px;top:554px"></div>
<div class="cbl" style="left:1574px;top:554px">PMA Part</div>
<div class="cb" style="left:475px;top:596px"></div>
<div class="cbl" style="left:505px;top:596px">Electrostatic</div>
<div class="a" style="left:97px;top:636px;width:1472px;height:97px;border:1px solid #c8d0d8;border-radius:4px"></div>
<div class="t" style="left:108px;top:629px;font-size:12.2px;font-weight:bold;color:#111;background:#fff;padding:0 3px;line-height:14px">Notes</div>
<div class="t" style="left:151px;top:647px;font-size:18.4px;color:#e0202a;line-height:21px">Photos can be uploaded from your mobile device using QR Codes</div>
<div class="t" style="left:1577px;top:637px;font-size:16.2px;color:#222;line-height:19px">Current Qty:</div>
<div class="t" style="left:1577px;top:660px;font-size:16.2px;color:#222;line-height:19px">22</div>
<div class="t" style="left:1577px;top:683px;font-size:16.2px;color:#222;line-height:19px">Remaining Qty:</div>
<div class="t" style="left:1577px;top:706px;font-size:16.2px;color:#222;line-height:19px">10</div>
<div class="t" style="left:1721px;top:637px;font-size:16.2px;color:#222;line-height:19px">Allocated Qty:</div>
<div class="t" style="left:1721px;top:660px;font-size:16.2px;color:#222;line-height:19px">22</div>
<div class="t" style="left:1721px;top:683px;font-size:16.2px;color:#222;line-height:19px">Alt Qty Avail:</div>
<div class="t" style="left:1721px;top:706px;font-size:16.2px;color:#222;line-height:19px">7</div>
<div class="a" style="left:97px;top:789px;width:1776px;height:42px;background:#f4f4f4;border-top:2px solid #e0961f;border-radius:3px 3px 0 0"></div>
<div class="t" style="left:105px;top:801px;font-size:16.2px;font-weight:bold;color:#111;line-height:19px">Inventory</div>
<div class="btn" style="left:1672px;top:794px;width:155px;height:32px;background:#e0961f"></div>
<div class="t" style="left:1705px;top:801px;font-size:13.6px;line-height:16px;color:#fff">ADD INVENTORY</div>
<svg class="a" style="left:1686px;top:801px;" width="14" height="14" viewBox="0 0 14 14"><path d="M7 0 V14 M0 7 H14" stroke="#fff" stroke-width="2"/></svg>
<svg class="a" style="left:1835px;top:798px;" width="31" height="25" viewBox="0 0 31 25"><rect x="0" y="0" width="25" height="23" fill="#9a9a9a"/><rect x="2" y="9" width="8" height="4" fill="#f4f4f4"/><rect x="2" y="15" width="8" height="4" fill="#f4f4f4"/><rect x="12" y="9" width="11" height="4" fill="#f4f4f4"/><path d="M13 25 L14.5 19 L26 7.5 L30.5 12 L19 23.5Z" fill="#555" stroke="#f4f4f4" stroke-width="1.2"/></svg>
<div class="t" style="left:129px;top:864px;font-size:16.2px;color:#222;line-height:19px">Pending Inbounds</div>
<div class="tg" style="left:274px;top:863px"><i></i></div>
<div class="t" style="left:374px;top:864px;font-size:16.2px;color:#222;line-height:19px">Alternate In stock</div>
<div class="tg" style="left:514px;top:863px"><i></i></div>
<div class="t" style="left:614px;top:864px;font-size:16.2px;color:#222;line-height:19px">Inventory Master Pools</div>
<div class="tg" style="left:793px;top:863px"><i></i></div>
<div class="a" style="left:113px;top:907px;width:1744px;height:33px;background:#f4f4f4"></div>
<div class="th" style="left:161px;width:198px">SIGNALS</div>
<div class="th" style="left:361px;width:101px">RECO…</div>
<div class="th" style="left:464px;width:148px">PART NUMBER</div>
<div class="th" style="left:614px;width:148px">DESCRIPTION</div>
<div class="th" style="left:764px;width:73px">CD</div>
<div class="th" style="left:839px;width:133px">CURRENT …</div>
<div class="th" style="left:974px;width:133px">ALLOCATE…</div>
<div class="th" style="left:1109px;width:133px">REMAININ…</div>
<div class="th" style="left:1244px;width:148px">EXPECTED Q…</div>
<div class="th" style="left:1394px;width:113px">UNIT C…</div>
<div class="th" style="left:1509px;width:170px">WAREHOUSE</div>
<div class="th" style="left:1681px;width:103px">LOCA…</div>
<div class="th" style="left:1786px;width:68px">SN</div>
<svg class="a" style="left:724px;top:916px;" width="14" height="16" viewBox="0 0 14 16"><path d="M7 15 V2 M1.5 7.5 L7 2 L12.5 7.5" stroke="#444" stroke-width="1.6" fill="none"/></svg>
<svg class="a" style="left:373px;top:959px;" width="18" height="8" viewBox="0 0 18 8"><rect x="0.6" y="2.4" width="16.6" height="1.7" rx="0.6" fill="#555"/><rect x="0.6" y="5.9" width="16.6" height="1.7" rx="0.6" fill="#555"/></svg>
<div class="fl" style="left:412px;width:41px">Filter...</div>
<svg class="a" style="left:623px;top:955px;" width="22" height="19" viewBox="0 0 22 19"><text x="0.8" y="14.5" font-family="Liberation Sans" font-size="12" fill="#666">a</text><rect x="7.6" y="3" width="7.8" height="14.6" fill="#6e6e6e"/><text x="8.2" y="14.5" font-family="Liberation Sans" font-weight="bold" font-size="12" fill="#fff">b</text><text x="16" y="14.5" font-family="Liberation Sans" font-size="12" fill="#666">c</text></svg>
<div class="fl" style="left:657px;width:96px">Filter...</div>
<svg class="a" style="left:773px;top:955px;" width="22" height="19" viewBox="0 0 22 19"><text x="0.8" y="14.5" font-family="Liberation Sans" font-size="12" fill="#666">a</text><rect x="7.6" y="3" width="7.8" height="14.6" fill="#6e6e6e"/><text x="8.2" y="14.5" font-family="Liberation Sans" font-weight="bold" font-size="12" fill="#fff">b</text><text x="16" y="14.5" font-family="Liberation Sans" font-size="12" fill="#666">c</text></svg>
<div class="fl" style="left:807px;width:29px;font-size:16.2px;line-height:17px">Filter...</div>
<svg class="a" style="left:854px;top:957px;" width="12" height="14" viewBox="0 0 12 14"><path d="M1.5 2 L10.5 7 L1.5 12" stroke="#555" stroke-width="1.6" fill="none"/></svg>
<div class="fl" style="left:882px;width:81px;color:#222;text-align:right;font-size:16.2px;line-height:16px">0.00</div>
<svg class="a" style="left:986px;top:959px;" width="18" height="8" viewBox="0 0 18 8"><rect x="0.6" y="2.4" width="16.6" height="1.7" rx="0.6" fill="#555"/><rect x="0.6" y="5.9" width="16.6" height="1.7" rx="0.6" fill="#555"/></svg>
<div class="fl" style="left:1017px;width:81px"></div>
<svg class="a" style="left:1121px;top:959px;" width="18" height="8" viewBox="0 0 18 8"><rect x="0.6" y="2.4" width="16.6" height="1.7" rx="0.6" fill="#555"/><rect x="0.6" y="5.9" width="16.6" height="1.7" rx="0.6" fill="#555"/></svg>
<div class="fl" style="left:1152px;width:81px"></div>
<svg class="a" style="left:1256px;top:959px;" width="18" height="8" viewBox="0 0 18 8"><rect x="0.6" y="2.4" width="16.6" height="1.7" rx="0.6" fill="#555"/><rect x="0.6" y="5.9" width="16.6" height="1.7" rx="0.6" fill="#555"/></svg>
<div class="fl" style="left:1287px;width:96px"></div>
<svg class="a" style="left:1406px;top:959px;" width="18" height="8" viewBox="0 0 18 8"><rect x="0.6" y="2.4" width="16.6" height="1.7" rx="0.6" fill="#555"/><rect x="0.6" y="5.9" width="16.6" height="1.7" rx="0.6" fill="#555"/></svg>
<div class="fl" style="left:1437px;width:61px"></div>
<svg class="a" style="left:1518px;top:955px;" width="22" height="19" viewBox="0 0 22 19"><text x="0.8" y="14.5" font-family="Liberation Sans" font-size="12" fill="#666">a</text><rect x="7.6" y="3" width="7.8" height="14.6" fill="#6e6e6e"/><text x="8.2" y="14.5" font-family="Liberation Sans" font-weight="bold" font-size="12" fill="#fff">b</text><text x="16" y="14.5" font-family="Liberation Sans" font-size="12" fill="#666">c</text></svg>
<div class="fl" style="left:1560px;width:111px">Filter...</div>
<svg class="a" style="left:1691px;top:955px;" width="22" height="19" viewBox="0 0 22 19"><text x="0.8" y="14.5" font-family="Liberation Sans" font-size="12" fill="#666">a</text><rect x="7.6" y="3" width="7.8" height="14.6" fill="#6e6e6e"/><text x="8.2" y="14.5" font-family="Liberation Sans" font-weight="bold" font-size="12" fill="#fff">b</text><text x="16" y="14.5" font-family="Liberation Sans" font-size="12" fill="#666">c</text></svg>
<div class="fl" style="left:1724px;width:59px;font-size:16.2px;line-height:17px">Filter...</div>
<svg class="a" style="left:1796px;top:955px;" width="22" height="19" viewBox="0 0 22 19"><text x="0.8" y="14.5" font-family="Liberation Sans" font-size="12" fill="#666">a</text><rect x="7.6" y="3" width="7.8" height="14.6" fill="#6e6e6e"/><text x="8.2" y="14.5" font-family="Liberation Sans" font-weight="bold" font-size="12" fill="#fff">b</text><text x="16" y="14.5" font-family="Liberation Sans" font-size="12" fill="#666">c</text></svg>
<div class="fl" style="left:1829px;width:16px;font-size:15px;line-height:17px">Filter...</div>
<div class="td" style="left:360px;top:989px;width:102px;padding-left:8px;background:#adc6d0;">123</div>
<div class="td" style="left:463px;top:989px;width:149px;padding-left:8px;">DK120</div>
<div class="td" style="left:613px;top:989px;width:149px;padding-left:8px;">RECORDER BEA…</div>
<div class="td" style="left:763px;top:989px;width:74px;padding-left:8px;">AR</div>
<div class="td" style="left:838px;top:989px;width:134px;padding-left:8px;">1.00</div>
<div class="td" style="left:973px;top:989px;width:134px;padding-left:8px;">0.00</div>
<div class="td" style="left:1108px;top:989px;width:134px;padding-left:8px;">0.00</div>
<div class="td" style="left:1243px;top:989px;width:149px;padding-left:8px;">0.00</div>
<div class="td" style="left:1393px;top:989px;width:114px;padding-left:8px;">USD</div>
<div class="td" style="left:1508px;top:989px;width:171px;padding-left:8px;">AHT</div>
<div class="td" style="left:1680px;top:989px;width:104px;padding-left:8px;">BAY10</div>
<div class="td" style="left:1785px;top:989px;width:69px;padding-left:8px;">123-8…</div>
<div class="t" style="left:1440px;top:989px;width:58px;text-align:right;font-size:14.2px;line-height:42px;color:#222">0.00</div>
<svg class="a" style="left:170px;top:998px;" width="26" height="26" viewBox="0 0 26 26"><circle cx="13" cy="13" r="13" fill="#e8e8e8"/><path d="M7.2 5.3 H18.6 V8.8 H16.8 V13 L20.5 16.5 V19.5 H5.5 V16.5 L9.2 13 V8.8 H7.2Z" fill="#8e8e8e"/><rect x="12.2" y="19" width="1.6" height="6.8" fill="#8e8e8e"/><rect x="11" y="8.8" width="1.2" height="5" fill="#a8a8a8"/></svg>
<svg class="a" style="left:203px;top:999px;" width="31" height="24" viewBox="0 0 31 24"><ellipse cx="15" cy="12" rx="11" ry="11" fill="none" stroke="#9b6a6a" stroke-width="3.5"/><circle cx="15" cy="12" r="8" fill="#a88080"/><rect x="1" y="8.5" width="29" height="7" transform="rotate(-12 15 12)" fill="#a06868"/><rect x="3" y="10" width="25" height="4" transform="rotate(-12 15 12)" fill="none" stroke="#c8a0a0" stroke-width="0.6"/></svg>
<svg class="a" style="left:241px;top:998px;" width="26" height="26" viewBox="0 0 26 26"><circle cx="13" cy="13" r="11.8" fill="#fff" stroke="#777" stroke-width="2"/><path d="M6 10.5 H10 L17 6.5 V19.5 L10 15.5 H6Z" fill="#777"/><rect x="8" y="15" width="2.5" height="4" fill="#777"/><path d="M19 10 Q20.5 13 19 16" stroke="#777" stroke-width="1.3" fill="none"/></svg>
<svg class="a" style="left:272px;top:998px;" width="28" height="26" viewBox="0 0 28 26"><circle cx="16" cy="13" r="9.4" fill="#a07070"/><path d="M11.35 22.97 A11 11 0 1 0 5.66 9.24" stroke="#555" stroke-width="1.2" fill="none"/><path d="M2.8 7 L5.6 9.9 L8.4 7.2" stroke="#444" stroke-width="1.2" fill="none"/><path d="M16 7.5 V13.5 H20.5" stroke="#6a4a4a" stroke-width="1.3" fill="none"/></svg>
<svg class="a" style="left:305px;top:999px;" width="20" height="24" viewBox="0 0 20 24"><circle cx="10" cy="6.5" r="5.6" fill="#e0961f"/><path d="M1.5 23 V18 Q1.5 13.5 6 13.5 H14 Q18.5 13.5 18.5 18 V23Z" fill="#e0961f"/></svg>
<svg class="a" style="left:331px;top:1000px;" width="14" height="22" viewBox="0 0 14 22"><path d="M1 1 H13 M1 21 H13" stroke="#8a7a5a" stroke-width="1.8"/><path d="M2.5 1.5 Q2.5 8 7 11 Q11.5 8 11.5 1.5 M2.5 20.5 Q2.5 14 7 11 Q11.5 14 11.5 20.5" stroke="#8a7a5a" stroke-width="1.2" fill="none"/><path d="M3.5 20 Q5 15.5 7 15 Q9 15.5 10.5 20Z" fill="#8a7a5a"/><path d="M5 7 Q7 9 9 7Z" fill="#8a7a5a"/></svg>
<svg class="a" style="left:119px;top:997px;filter:drop-shadow(0 2px 2px rgba(0,0,0,.3));overflow:visible" width="28" height="28" viewBox="0 0 28 28"><circle cx="14" cy="14" r="14" fill="#e0961f"/><path d="M11.5 9 L16.5 14 L11.5 19" stroke="#fff" stroke-width="1.8" fill="none"/></svg>
<div class="td" style="left:360px;top:1033px;width:102px;padding-left:8px;">128</div>
<div class="td" style="left:463px;top:1033px;width:149px;padding-left:8px;">DK120</div>
<div class="td" style="left:613px;top:1033px;width:149px;padding-left:8px;">RECORDER BEA…</div>
<div class="td" style="left:763px;top:1033px;width:74px;padding-left:8px;">SV</div>
<div class="td" style="left:838px;top:1033px;width:134px;padding-left:8px;">1.00</div>
<div class="td" style="left:973px;top:1033px;width:134px;padding-left:8px;">1.00</div>
<div class="td" style="left:1108px;top:1033px;width:134px;padding-left:8px;">0.00</div>
<div class="td" style="left:1243px;top:1033px;width:149px;padding-left:8px;">0.00</div>
<div class="td" style="left:1393px;top:1033px;width:114px;padding-left:8px;">USD</div>
<div class="td" style="left:1508px;top:1033px;width:171px;padding-left:8px;">BOEING</div>
<div class="td" style="left:1680px;top:1033px;width:104px;padding-left:8px;">AHT-LOC-1</div>
<div class="td" style="left:1785px;top:1033px;width:69px;padding-left:8px;">12</div>
<div class="t" style="left:1440px;top:1033px;width:58px;text-align:right;font-size:14.2px;line-height:42px;color:#222">0.00</div>
<svg class="a" style="left:170px;top:1042px;" width="26" height="26" viewBox="0 0 26 26"><circle cx="13" cy="13" r="13" fill="#e8e8e8"/><path d="M7.2 5.3 H18.6 V8.8 H16.8 V13 L20.5 16.5 V19.5 H5.5 V16.5 L9.2 13 V8.8 H7.2Z" fill="#8e8e8e"/><rect x="12.2" y="19" width="1.6" height="6.8" fill="#8e8e8e"/><rect x="11" y="8.8" width="1.2" height="5" fill="#a8a8a8"/></svg>
<svg class="a" style="left:203px;top:1043px;" width="31" height="24" viewBox="0 0 31 24"><ellipse cx="15" cy="12" rx="11" ry="11" fill="none" stroke="#9b6a6a" stroke-width="3.5"/><circle cx="15" cy="12" r="8" fill="#a88080"/><rect x="1" y="8.5" width="29" height="7" transform="rotate(-12 15 12)" fill="#a06868"/><rect x="3" y="10" width="25" height="4" transform="rotate(-12 15 12)" fill="none" stroke="#c8a0a0" stroke-width="0.6"/></svg>
<svg class="a" style="left:241px;top:1042px;" width="26" height="26" viewBox="0 0 26 26"><circle cx="13" cy="13" r="11.8" fill="#fff" stroke="#777" stroke-width="2"/><path d="M6 10.5 H10 L17 6.5 V19.5 L10 15.5 H6Z" fill="#777"/><rect x="8" y="15" width="2.5" height="4" fill="#777"/><path d="M19 10 Q20.5 13 19 16" stroke="#777" stroke-width="1.3" fill="none"/></svg>
<svg class="a" style="left:272px;top:1042px;" width="28" height="26" viewBox="0 0 28 26"><circle cx="16" cy="13" r="9.4" fill="#a07070"/><path d="M11.35 22.97 A11 11 0 1 0 5.66 9.24" stroke="#555" stroke-width="1.2" fill="none"/><path d="M2.8 7 L5.6 9.9 L8.4 7.2" stroke="#444" stroke-width="1.2" fill="none"/><path d="M16 7.5 V13.5 H20.5" stroke="#6a4a4a" stroke-width="1.3" fill="none"/></svg>
<svg class="a" style="left:305px;top:1043px;" width="20" height="24" viewBox="0 0 20 24"><circle cx="10" cy="6.5" r="5.6" fill="#8c7a5e"/><path d="M1.5 23 V18 Q1.5 13.5 6 13.5 H14 Q18.5 13.5 18.5 18 V23Z" fill="#8c7a5e"/></svg>
<svg class="a" style="left:331px;top:1044px;" width="14" height="22" viewBox="0 0 14 22"><path d="M1 1 H13 M1 21 H13" stroke="#8a7a5a" stroke-width="1.8"/><path d="M2.5 1.5 Q2.5 8 7 11 Q11.5 8 11.5 1.5 M2.5 20.5 Q2.5 14 7 11 Q11.5 14 11.5 20.5" stroke="#8a7a5a" stroke-width="1.2" fill="none"/><path d="M3.5 20 Q5 15.5 7 15 Q9 15.5 10.5 20Z" fill="#8a7a5a"/><path d="M5 7 Q7 9 9 7Z" fill="#8a7a5a"/></svg>
<svg class="a" style="left:119px;top:1041px;filter:drop-shadow(0 2px 2px rgba(0,0,0,.3));overflow:visible" width="28" height="28" viewBox="0 0 28 28"><circle cx="14" cy="14" r="14" fill="#e0961f"/><path d="M11.5 9 L16.5 14 L11.5 19" stroke="#fff" stroke-width="1.8" fill="none"/></svg>
<div class="a" style="left:113px;top:907px;width:1744px;height:2px;background:#dcdcdc"></div>
<div class="a" style="left:113px;top:939px;width:1744px;height:2px;background:#dcdcdc"></div>
<div class="a" style="left:113px;top:987px;width:1744px;height:2px;background:#dcdcdc"></div>
<div class="a" style="left:113px;top:1031px;width:1744px;height:2px;background:#dcdcdc"></div>
<div class="a" style="left:113px;top:1075px;width:1744px;height:2px;background:#dcdcdc"></div>
<div class="a" style="left:113px;top:907px;width:2px;height:173px;background:#dcdcdc"></div>
<div class="a" style="left:158px;top:907px;width:2px;height:173px;background:#dcdcdc"></div>
<div class="a" style="left:358px;top:907px;width:2px;height:173px;background:#dcdcdc"></div>
<div class="a" style="left:461px;top:907px;width:2px;height:173px;background:#dcdcdc"></div>
<div class="a" style="left:611px;top:907px;width:2px;height:173px;background:#dcdcdc"></div>
<div class="a" style="left:761px;top:907px;width:2px;height:173px;background:#dcdcdc"></div>
<div class="a" style="left:836px;top:907px;width:2px;height:173px;background:#dcdcdc"></div>
<div class="a" style="left:971px;top:907px;width:2px;height:173px;background:#dcdcdc"></div>
<div class="a" style="left:1106px;top:907px;width:2px;height:173px;background:#dcdcdc"></div>
<div class="a" style="left:1241px;top:907px;width:2px;height:173px;background:#dcdcdc"></div>
<div class="a" style="left:1391px;top:907px;width:2px;height:173px;background:#dcdcdc"></div>
<div class="a" style="left:1506px;top:907px;width:2px;height:173px;background:#dcdcdc"></div>
<div class="a" style="left:1678px;top:907px;width:2px;height:173px;background:#dcdcdc"></div>
<div class="a" style="left:1783px;top:907px;width:2px;height:173px;background:#dcdcdc"></div>
<div class="a" style="left:1853px;top:907px;width:2px;height:173px;background:#dcdcdc"></div>
</body></html>
